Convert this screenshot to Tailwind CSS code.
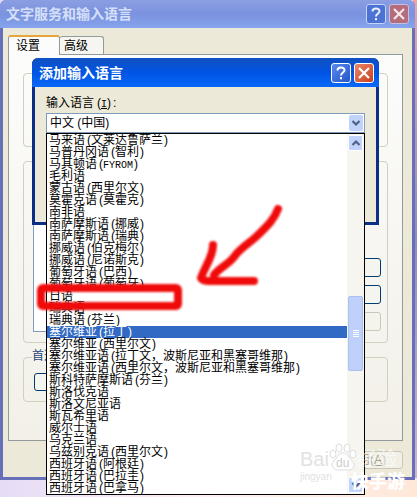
<!DOCTYPE html>
<html lang="zh-CN">

<head>
    <meta charset="UTF-8">
    <meta name="viewport" content="width=device-width, initial-scale=1.0">
    <title>文字服务和输入语言</title>
    <script src="https://cdn.jsdelivr.net/npm/@tailwindcss/browser@4"></script>
</head>

<body class="relative min-h-screen overflow-hidden bg-linear-to-r from-[#e6dcf6] via-[#fff0f2] to-[#ffe8d8] font-['Liberation_Sans','Noto_Sans_CJK_SC',sans-serif] text-xs leading-3 text-black">

    <!-- Fondo de escritorio a la derecha -->
    <div class="absolute top-0 right-0 h-[478px] w-1 bg-linear-to-b from-[#f0a0a8] via-[#9088c8] to-[#d8b0d0]"></div>

    <!-- Ventana principal -->
    <div class="relative mr-[2px] rounded-t-md border-x-[3px] border-b-[3px] border-[#6670b8] bg-[#ece9d8]">
        <header class="-mx-[3px] flex h-7 items-center rounded-t-md bg-linear-to-b from-[#8b9ee2] via-[#7b92df] to-[#86a4ed] pr-[6px] pl-[6px]">
            <h1 class="flex-1 text-sm font-bold text-[#d5e0f8]">文字服务和输入语言</h1>
            <div class="flex gap-[3px]">
                <button type="button" aria-label="帮助" class="flex size-5 items-center justify-center rounded-[3px] border border-[#c5d3f8] bg-[#4c72d3]">
                    <svg class="size-4" viewBox="0 0 16 16" fill="none" stroke="#e8eefc" stroke-width="2">
                        <path d="M4.500 5.500C4.500 1.500 11.500 1.500 11.500 5.200C11.500 7.500 8 7.500 8 10.500M8 12V14.200" />
                    </svg>
                </button>
                <button type="button" aria-label="关闭" class="flex size-5 items-center justify-center rounded-[3px] border border-[#c5c0e4] bg-[#b56d7c]">
                    <svg class="size-4" viewBox="0 0 16 16" stroke="#f4e8ec" stroke-width="2.200">
                        <path d="M3 3L13 13M13 3L3 13" />
                    </svg>
                </button>
            </div>
        </header>

        <div class="px-[5px] pt-[6px] pb-2">
            <div role="tablist" class="flex h-5 items-end">
                <button type="button" role="tab" aria-selected="true" class="relative z-10 -mb-px h-5 w-[52px] rounded-t-[3px] border border-t-2 border-b-0 border-[#919b9c] border-t-[#e5a53c] bg-[#fcfcfc] pr-3">设置</button>
                <button type="button" role="tab" aria-selected="false" class="h-[18px] w-[44px] rounded-t-[3px] border border-b-0 border-l-0 border-[#919b9c] bg-[#f6f5ef] pr-3 pl-1 text-left">高级</button>
            </div>

            <div role="tabpanel" class="mr-1 flex h-[387px] flex-col gap-[14px] border border-[#919b9c] bg-linear-to-b from-[#fcfcfb] to-[#f2f0e8] px-[14px] pt-[18px]">
                <div class="h-[74px] rounded-sm border border-[#d0d0bf]"></div>
                <div class="flex h-[182px] justify-between rounded-sm border border-[#d0d0bf] pr-[6px] pl-[9px]">
                    <div class="mb-[10px] w-40 border border-[#7f9db9] bg-white"></div>
                    <div class="flex flex-col gap-2 pt-24">
                        <button type="button" class="h-[19px] w-20 rounded-[3px] border border-[#003c74] bg-[#f5f5f0]" aria-label="添加"></button>
                        <button type="button" class="h-[19px] w-20 rounded-[3px] border border-[#003c74] bg-[#f5f5f0]" aria-label="删除"></button>
                        <button type="button" class="h-[19px] w-20 rounded-[3px] border border-[#c9c7ba] bg-[#f5f4ea]" aria-label="属性"></button>
                    </div>
                </div>
                <fieldset class="relative h-[45px] rounded-sm border border-[#d0d0bf]">
                    <legend class="sr-only">首选项</legend>
                    <span aria-hidden="true" class="absolute -top-2 left-2 bg-[#f4f2eb] text-[#1f497d]">首选项</span>
                    <button type="button" aria-label="语言栏" class="mt-[15px] ml-[10px] h-[18px] w-24 rounded-[3px] border border-[#003c74] bg-[#f5f5f0]"></button>
                </fieldset>
            </div>

            <div class="mt-[10px] flex justify-end pr-1">
                <button type="button" class="h-[18px] w-[73px] rounded-[3px] border border-[#c9c7ba] bg-[#f2f0e6] pr-4 text-right whitespace-nowrap text-[#a5a294]">应用(<u>A</u>)</button>
            </div>
        </div>
    </div>

    <!-- Dialogo de idioma -->
    <div role="dialog" aria-labelledby="dialogTitle" class="absolute top-[58px] right-[38px] left-8 h-[167px] rounded-t-md border-x-[3px] border-b-[3px] border-[#0c2f86] bg-[#ece9d8]">
        <header class="-mx-[3px] flex h-[29px] items-center rounded-t-md bg-linear-to-b from-[#1050c0] via-[#0054e4] to-[#0a68f8] pr-[5px] pl-[7px]">
            <h2 id="dialogTitle" class="flex-1 text-sm font-bold text-white">添加输入语言</h2>
            <div class="flex gap-[3px]">
                <button type="button" aria-label="帮助" class="flex size-5 items-center justify-center rounded-[3px] border border-white bg-linear-to-br from-[#5a88ee] to-[#2356c8]">
                    <svg class="size-4" viewBox="0 0 16 16" fill="none" stroke="white" stroke-width="2">
                        <path d="M4.500 5.500C4.500 1.500 11.500 1.500 11.500 5.200C11.500 7.500 8 7.500 8 10.500M8 12V14.200" />
                    </svg>
                </button>
                <button type="button" aria-label="关闭" class="flex size-5 items-center justify-center rounded-[3px] border border-white bg-linear-to-br from-[#e98767] to-[#c83c18]">
                    <svg class="size-4" viewBox="0 0 16 16" stroke="white" stroke-width="2.200">
                        <path d="M3 3L13 13M13 3L3 13" />
                    </svg>
                </button>
            </div>
        </header>

        <div class="px-[11px] pt-[10px]">
            <label for="idioma" class="block h-4 leading-3">输入语言<span class="inline-block w-[7px] text-right">(</span><span class="font-['Liberation_Mono',monospace] text-[10px]"><u>I</u></span><span class="inline-block w-[6px]">)</span>:</label>
            <div class="relative">
                <select id="idioma" class="block h-5 w-full appearance-none border border-[#7f9db9] bg-white pl-[3px] text-xs leading-4">
                    <option>中文 (中国)</option>
                </select>
                <span class="pointer-events-none absolute top-[2px] right-[2px] flex h-4 w-[14px] items-center justify-center rounded-xs bg-[#c1d3fb]">
                    <svg class="size-[10px]" viewBox="0 0 10 10" fill="none" stroke="#4d6185" stroke-width="2.200"><path d="M1.500 3L5 6.500L8.500 3" /></svg>
                </span>

                <div class="absolute top-5 right-0 left-0 flex border border-black bg-white">
                    <ul id="lista" role="listbox" aria-label="输入语言" class="min-w-0 flex-1"></ul>
                    <div class="flex w-[17px] flex-col bg-[#f6f5ef] px-px py-px">
                        <button type="button" aria-label="向上" class="flex h-4 items-center justify-center rounded-xs border border-white bg-[#c1d3fb]">
                            <svg class="size-[10px]" viewBox="0 0 10 10" fill="none" stroke="#4d6185" stroke-width="2.200"><path d="M1.500 7L5 3.500L8.500 7" /></svg>
                        </button>
                        <div class="flex-1 pt-[145px]">
                            <div class="flex h-[75px] flex-col items-center justify-center gap-px rounded-xs border border-[#a9bff2] bg-[#bfd0fa]">
                                <i class="h-px w-[6px] bg-white"></i>
                                <i class="h-px w-[6px] bg-white"></i>
                                <i class="h-px w-[6px] bg-white"></i>
                                <i class="h-px w-[6px] bg-white"></i>
                            </div>
                        </div>
                        <button type="button" aria-label="向下" class="flex h-4 items-center justify-center rounded-xs border border-white bg-[#c1d3fb]">
                            <svg class="size-[10px]" viewBox="0 0 10 10" fill="none" stroke="#4d6185" stroke-width="2.200"><path d="M1.500 3L5 6.500L8.500 3" /></svg>
                        </button>
                    </div>
                </div>
            </div>
        </div>
    </div>

    <!-- Marca de agua -->
    <div aria-hidden="true" class="absolute top-[443px] left-[300px] text-[#e2e2e2]">
        <div class="flex items-center pt-1 text-xl leading-5">
            <span>Bai</span>
            <svg class="-mt-1 h-7 w-7" viewBox="0 0 28 28" fill="white" stroke="#dddddd">
                <ellipse cx="4" cy="11" rx="3" ry="4" />
                <ellipse cx="10" cy="5" rx="3" ry="4" />
                <ellipse cx="18" cy="5" rx="3" ry="4" />
                <ellipse cx="24" cy="11" rx="3" ry="4" />
                <path d="M14 10C9 10 8 15 5 18C1 22 4 27 9 27C12 27 16 27 19 27C25 27 27 22 23 18C20 15 19 10 14 10Z" />
                <text x="7" y="24" font-size="12" fill="#cccccc" stroke="none">du</text>
            </svg>
            <span class="text-white/60">经验</span>
        </div>
        <div class="text-[10px] leading-3">jingyan</div>
    </div>
    <div aria-hidden="true" class="absolute top-[470px] right-3 font-['Noto_Sans_CJK_SC',sans-serif] text-lg leading-5 font-black text-white">快手游</div>

    <!-- Flecha y recuadro -->
    <svg class="pointer-events-none absolute top-[195px] left-8 h-[120px] w-[260px] blur-[1px]" viewBox="32 195 260 120" fill="none" stroke="#f00a0a" stroke-linecap="round" stroke-linejoin="round">
        <rect x="41" y="288" width="137" height="18" rx="2" stroke-width="8" />
        <path stroke-width="8" d="M278 209C274 220 266 227 258 235C250 243 240 248 234 257C229 264 219 268 214 275M213 245C213 257 205 266 201 278Q202 281 210 281L254 281" />
    </svg>

    <script>
        const idiomas = [
            '马来语 (文莱达鲁萨兰)', '马普丹冈语 (智利)', '马其顿语 (FYROM)', '毛利语', '蒙古语 (西里尔文)',
            '莫霍克语 (莫霍克)', '南非语', '南萨摩斯语 (挪威)', '南萨摩斯语 (瑞典)', '挪威语 (伯克梅尔)',
            '挪威语 (尼诺斯克)', '葡萄牙语 (巴西)', '葡萄牙语 (葡萄牙)', '日语', '瑞典语', '瑞典语 (芬兰)',
            '塞尔维亚 (拉丁)', '塞尔维亚 (西里尔文)', '塞尔维亚语 (拉丁文，波斯尼亚和黑塞哥维那)',
            '塞尔维亚语 (西里尔文，波斯尼亚和黑塞哥维那)', '斯科特萨摩斯语 (芬兰)', '斯洛伐克语', '斯洛文尼亚语',
            '斯瓦希里语', '威尔士语', '乌克兰语', '乌兹别克语 (西里尔文)', '西班牙语 (阿根廷)', '西班牙语 (巴拉圭)',
            '西班牙语 (巴拿马)'
        ];

        const lista = document.getElementById('lista');

        idiomas.forEach((idioma) => {
            const li = document.createElement('li');
            li.setAttribute('role', 'option');
            li.className = 'h-3 pl-[2px] leading-3 whitespace-nowrap';
            if (idioma === '塞尔维亚 (拉丁)') {
                li.className = 'h-3 bg-[#316ac5] pl-[2px] leading-3 whitespace-nowrap text-white';
                li.setAttribute('aria-selected', 'true');
            }
            // parentesis y letras latinas a medio ancho
            li.innerHTML = idioma
                .replace(/[A-Z]+/, (t) => `<span class="font-['Liberation_Mono',monospace] text-[10px]">${t}</span>`)
                .replace(' (', '<span class="inline-block w-[6px] text-right">(</span>')
                .replace(')', '<span class="inline-block w-[6px] pl-px">)</span>');
            lista.appendChild(li);
        });
    </script>
</body>

</html>
